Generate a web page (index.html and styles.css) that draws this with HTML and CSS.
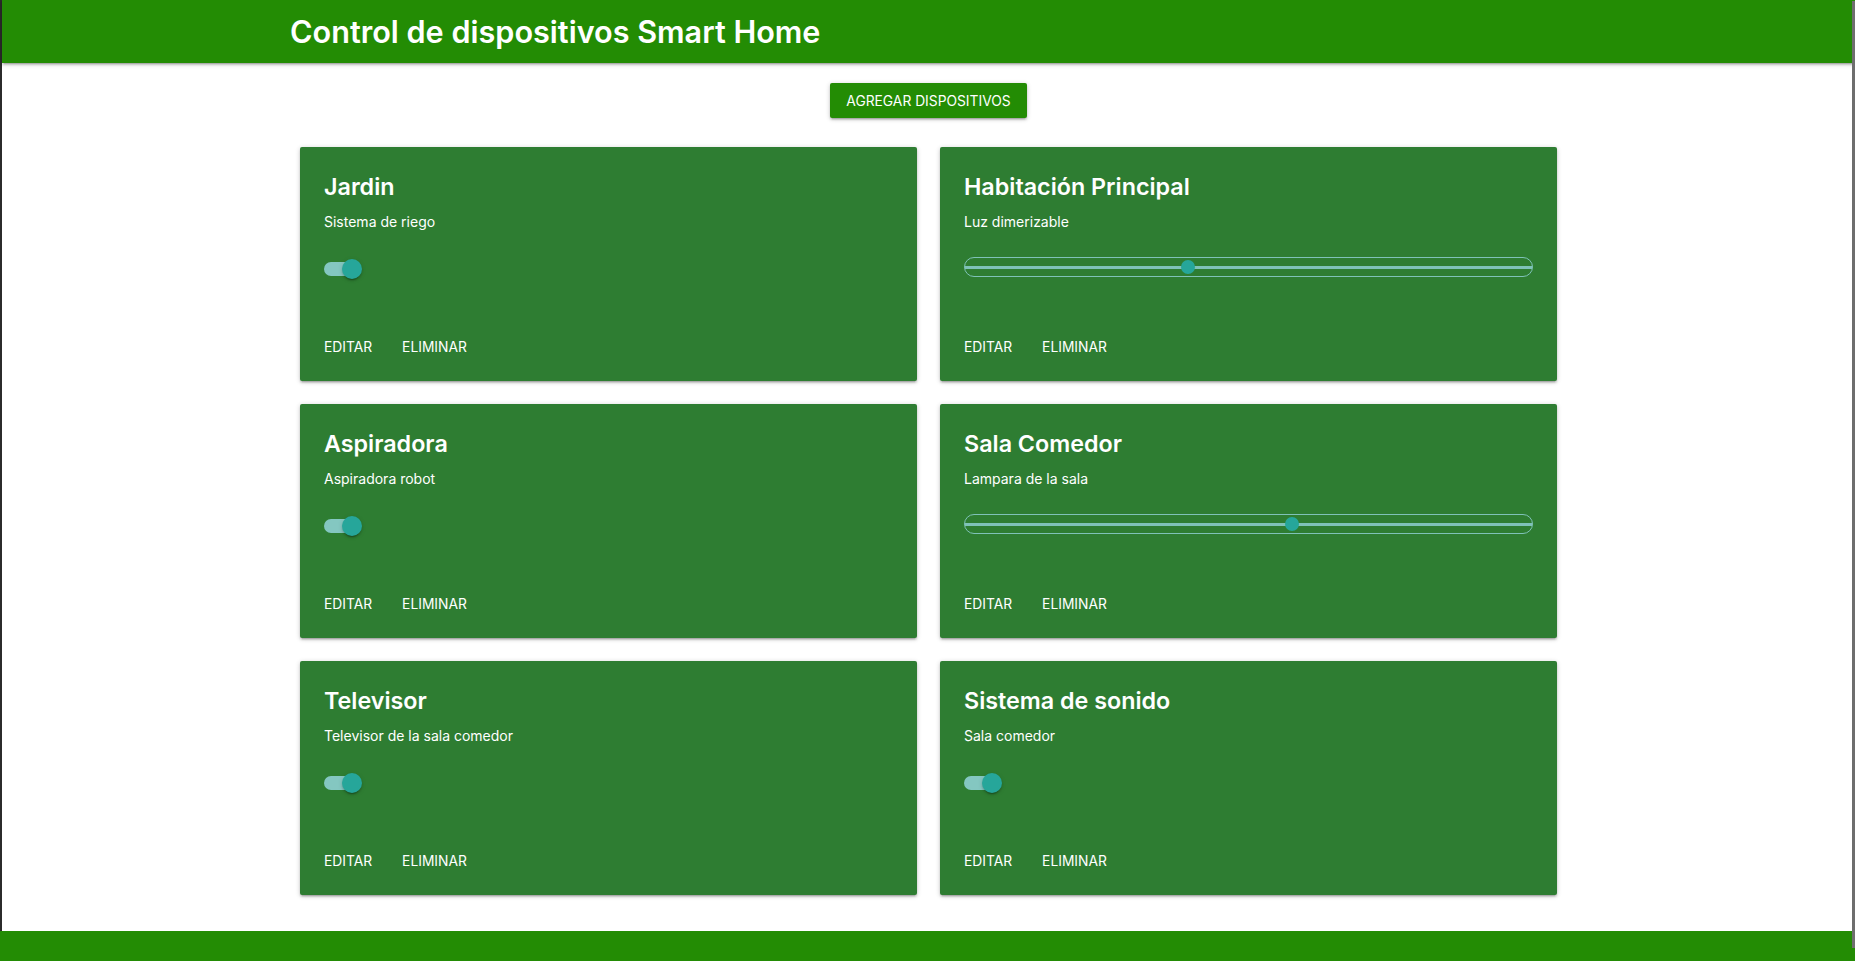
FILE: index.html
```html
<!DOCTYPE html>
<html lang="es">
<head>
<meta charset="utf-8">
<title>Smart Home</title>
<link rel="stylesheet" href="styles.css">
</head>
<body>
<div class="frame">
  <header class="topbar">
    <h1 class="brand">Control de dispositivos Smart Home</h1>
  </header>
  <main class="content">
    <div class="toolbar"><button class="btn">Agregar dispositivos</button></div>
    <section class="grid">
      <article class="card">
        <div class="card-content">
          <h2 class="card-title">Jardin</h2>
          <p class="card-desc">Sistema de riego</p>
          <div class="control control-switch"><span class="switch"><span class="lever"></span><span class="thumb"></span></span></div>
        </div>
        <div class="card-action"><a class="action">Editar</a><a class="action">Eliminar</a></div>
      </article>
      <article class="card">
        <div class="card-content">
          <h2 class="card-title">Habitación Principal</h2>
          <p class="card-desc">Luz dimerizable</p>
          <div class="control control-range"><div class="range"><span class="range-track"></span><span class="range-thumb" style="left:39.3%"></span></div></div>
        </div>
        <div class="card-action"><a class="action">Editar</a><a class="action">Eliminar</a></div>
      </article>
      <article class="card">
        <div class="card-content">
          <h2 class="card-title">Aspiradora</h2>
          <p class="card-desc">Aspiradora robot</p>
          <div class="control control-switch"><span class="switch"><span class="lever"></span><span class="thumb"></span></span></div>
        </div>
        <div class="card-action"><a class="action">Editar</a><a class="action">Eliminar</a></div>
      </article>
      <article class="card">
        <div class="card-content">
          <h2 class="card-title">Sala Comedor</h2>
          <p class="card-desc">Lampara de la sala</p>
          <div class="control control-range"><div class="range"><span class="range-track"></span><span class="range-thumb" style="left:57.7%"></span></div></div>
        </div>
        <div class="card-action"><a class="action">Editar</a><a class="action">Eliminar</a></div>
      </article>
      <article class="card">
        <div class="card-content">
          <h2 class="card-title">Televisor</h2>
          <p class="card-desc">Televisor de la sala comedor</p>
          <div class="control control-switch"><span class="switch"><span class="lever"></span><span class="thumb"></span></span></div>
        </div>
        <div class="card-action"><a class="action">Editar</a><a class="action">Eliminar</a></div>
      </article>
      <article class="card">
        <div class="card-content">
          <h2 class="card-title">Sistema de sonido</h2>
          <p class="card-desc">Sala comedor</p>
          <div class="control control-switch"><span class="switch"><span class="lever"></span><span class="thumb"></span></span></div>
        </div>
        <div class="card-action"><a class="action">Editar</a><a class="action">Eliminar</a></div>
      </article>
    </section>
  </main>
</div>
<footer class="footer"></footer>
<div class="scroll-thumb"></div>
</body>
</html>
```

FILE: styles.css
```css
html, body { margin: 0; padding: 0; height: 961px; overflow: hidden; }
body { font-family: "Inter", "Noto Sans", sans-serif; background: #fff; position: relative; }
.frame { border-left: 2px solid #2b2b2b; }
.topbar { height: 63px; background: #238c04; box-shadow: 0 2px 2px 0 rgba(0,0,0,.14), 0 3px 1px -2px rgba(0,0,0,.12), 0 1px 5px 0 rgba(0,0,0,.2); padding-left: 288px; display: flex; align-items: center; position: relative; }
.brand { margin: 0; color: #fff; font-size: 30.6px; font-weight: 600; letter-spacing: 0; }
.content { padding-top: 20px; height: 868px; box-sizing: border-box; }
.toolbar { display: flex; justify-content: center; }
.btn { height: 35px; padding: 0 16px; border: none; border-radius: 2px; background: #238c04; color: #fff; font-family: inherit; font-size: 13.8px; text-transform: uppercase; box-shadow: 0 2px 2px 0 rgba(0,0,0,.14), 0 3px 1px -2px rgba(0,0,0,.12), 0 1px 5px 0 rgba(0,0,0,.2); }
.grid { width: 1257px; margin: 29px auto 0; display: grid; grid-template-columns: 617px 617px; column-gap: 23px; row-gap: 23px; }
.card { height: 234px; background: #2e7d32; border-radius: 2px; color: #fff; display: flex; flex-direction: column; justify-content: space-between; box-shadow: 0 2px 2px 0 rgba(0,0,0,.14), 0 3px 1px -2px rgba(0,0,0,.12), 0 1px 5px 0 rgba(0,0,0,.2); }
.card-content { padding: 24px 24px 0; }
.card-title { margin: 0 0 8px; font-size: 23.3px; line-height: 32px; font-weight: 600; }
.card-desc { margin: 0; font-size: 14px; line-height: 21px; }
.control { height: 20px; margin-top: 25px; }
.control-switch { margin-top: 27px; }
.switch { position: relative; display: inline-block; width: 36px; height: 14px; margin-top: 3px; }
.lever { display: block; width: 36px; height: 14px; border-radius: 15px; background: #84c7c1; }
.thumb { position: absolute; left: 18px; top: -3px; width: 20px; height: 20px; border-radius: 50%; background: #26a69a; box-shadow: 0 3px 1px -2px rgba(0,0,0,.2), 0 2px 2px 0 rgba(0,0,0,.14), 0 1px 5px 0 rgba(0,0,0,.12); }
.range { position: relative; height: 20px; box-sizing: border-box; border: 1px solid #7fc2b8; border-radius: 10px; }
.range-track { position: absolute; left: 0; right: 0; top: 8px; height: 3px; background: #7fc2b8; }
.range-thumb { position: absolute; top: 2px; width: 14px; height: 14px; margin-left: -7px; border-radius: 50%; background: #26a69a; }
.card-action { padding: 0 24px 24px; display: flex; gap: 30px; line-height: 20px; }
.action { font-size: 13.8px; text-transform: uppercase; color: #fff; }
.footer { height: 30px; background: #238c04; }
.scroll-thumb { position: absolute; right: 0; top: 1px; width: 3px; height: 947px; background: #6e6e6e; }
```
